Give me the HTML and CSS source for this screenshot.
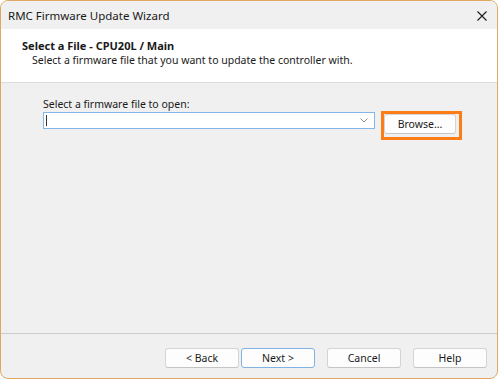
FILE: index.html
```html
<!DOCTYPE html>
<html lang="en">
<head>
  <meta charset="UTF-8" />
  <title>RMC Firmware Update Wizard</title>
  <link rel="stylesheet" href="styles.css">
</head>
<body>
  <div class="window">
    <div class="titlebar">
      <span class="title">RMC Firmware Update Wizard</span>
      <svg class="close" width="10" height="10" viewBox="0 0 10 10">
        <path d="M0.5 0.5 L9.5 9.5 M9.5 0.5 L0.5 9.5" stroke="#1a1a1a" stroke-width="1.1" fill="none"/>
      </svg>
    </div>

    <div class="header">
      <div class="header-title">Select a File - CPU20L / Main</div>
      <div class="header-sub">Select a firmware file that you want to update the controller with.</div>
    </div>

    <div class="content">
      <div class="field-label">Select a firmware file to open:</div>
      <div class="field-row">
        <div class="combo">
          <span class="caret"></span>
          <svg class="chevron" width="8" height="5" viewBox="0 0 8 5">
            <path d="M0.5 0.5 L4 4 L7.5 0.5" stroke="#8a8a8a" stroke-width="1" fill="none"/>
          </svg>
        </div>
        <div class="highlight">
          <button class="btn browse">Browse...</button>
        </div>
      </div>
    </div>

    <div class="footer">
      <div class="pair">
        <button class="btn">&lt; Back</button>
        <button class="btn default">Next &gt;</button>
      </div>
      <button class="btn">Cancel</button>
      <button class="btn">Help</button>
    </div>
  </div>
</body>
</html>
```

FILE: styles.css
```css
html, body {
  margin: 0;
  padding: 0;
  background: #ffffff;
}

body {
  font-family: "Noto Sans", "Open Sans", sans-serif;
  font-size: 10.5px;
  color: #1a1a1a;
}

.window {
  width: 498px;
  height: 379px;
  box-sizing: border-box;
  border: 1px solid #e2a862;
  border-radius: 8px;
  overflow: hidden;
  display: flex;
  flex-direction: column;
  background: #f0f0f0;
}

.titlebar {
  height: 28px;
  flex: none;
  display: flex;
  align-items: center;
  justify-content: space-between;
  padding: 0 10px 0 7px;
  background: #f0f0f0;
}

.title {
  font-size: 11.5px;
  color: #1a1a1a;
}

.close {
  display: block;
  margin-top: 1px;
}

.header {
  height: 54px;
  flex: none;
  box-sizing: border-box;
  background: #ffffff;
  border-bottom: 1px solid #dcdcdc;
  padding: 9px 0 0 21px;
}

.header-title {
  font-size: 11px;
  font-weight: bold;
  line-height: 15px;
}

.header-sub {
  line-height: 15px;
  padding-left: 10px;
}

.content {
  flex: 1;
  padding: 12px 0 0 42px;
}

.field-label {
  line-height: 16px;
  padding-top: 1px;
}

.field-row {
  display: flex;
  align-items: flex-start;
}

.combo {
  width: 332px;
  height: 17px;
  box-sizing: border-box;
  border: 1px solid #84b6e6;
  background: #ffffff;
  display: flex;
  align-items: center;
  justify-content: space-between;
  padding: 0 6px 0 2px;
}

.caret {
  width: 1px;
  height: 11px;
  background: #333333;
}

.highlight {
  margin-left: 6px;
  margin-top: -1px;
  border: 3px solid #fc7c16;
  padding: 0 3px 3px 0;
}

.btn {
  font-family: inherit;
  font-size: 10.5px;
  color: #1a1a1a;
  width: 74px;
  height: 20px;
  padding: 0;
  background: #fdfdfd;
  border: 1px solid #d4d4d4;
  border-bottom-color: #c4c4c4;
  border-radius: 3px;
}

.browse {
  width: 72px;
  display: block;
}

.btn.default {
  border-color: #80b2e2;
}

.footer {
  height: 45px;
  flex: none;
  box-sizing: border-box;
  border-top: 1px solid #cccccc;
  display: flex;
  justify-content: flex-end;
  align-items: flex-start;
  gap: 12px;
  padding: 14px 10px 0 0;
}

.pair {
  display: flex;
  gap: 2px;
}
```
